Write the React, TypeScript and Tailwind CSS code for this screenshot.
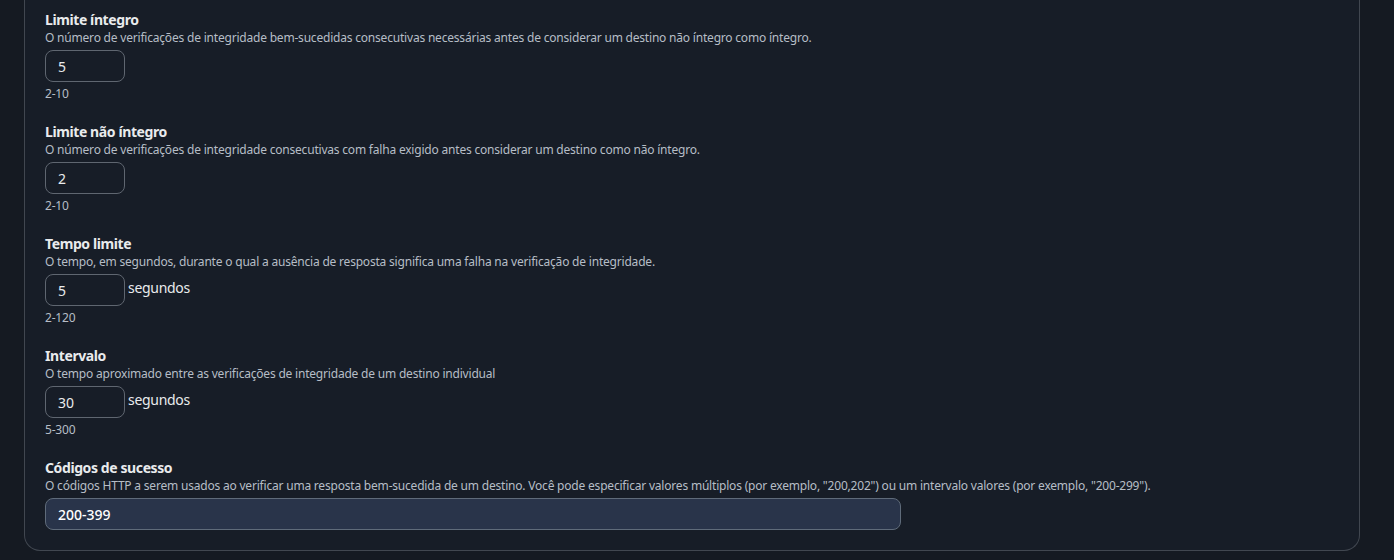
import React from 'react';

type Field = {
  label: string;
  description: string;
  value: string;
  hint?: string;
  unit?: string;
  wide?: boolean;
};

const FIELDS: Field[] = [
  {
    label: 'Limite íntegro',
    description:
      'O número de verificações de integridade bem-sucedidas consecutivas necessárias antes de considerar um destino não íntegro como íntegro.',
    value: '5',
    hint: '2-10',
  },
  {
    label: 'Limite não íntegro',
    description:
      'O número de verificações de integridade consecutivas com falha exigido antes considerar um destino como não íntegro.',
    value: '2',
    hint: '2-10',
  },
  {
    label: 'Tempo limite',
    description:
      'O tempo, em segundos, durante o qual a ausência de resposta significa uma falha na verificação de integridade.',
    value: '5',
    unit: 'segundos',
    hint: '2-120',
  },
  {
    label: 'Intervalo',
    description: 'O tempo aproximado entre as verificações de integridade de um destino individual',
    value: '30',
    unit: 'segundos',
    hint: '5-300',
  },
  {
    label: 'Códigos de sucesso',
    description:
      'O códigos HTTP a serem usados ao verificar uma resposta bem-sucedida de um destino. Você pode especificar valores múltiplos (por exemplo, "200,202") ou um intervalo valores (por exemplo, "200-299").',
    value: '200-399',
    wide: true,
  },
];

function FormField({ field }: { field: Field }) {
  return (
    <div className="flex flex-col">
      <label className="text-[14px] font-bold leading-[18px] tracking-[-0.4px] text-[#e9ebed]">
        {field.label}
      </label>
      <p className="mt-px text-[12px] leading-[16px] tracking-[-0.2px] text-[#b6bdc6]">{field.description}</p>
      <div className="mt-[4px] flex items-start gap-[3px]">
        {field.wide ? (
          <div className="flex h-[32px] w-[856px] items-center rounded-[8px] border border-[#5f6b7a] bg-[#29344a] px-[12px] text-[14px] font-medium text-white">
            {field.value}
          </div>
        ) : (
          <div className="flex h-[32px] w-[80px] items-center rounded-[8px] border border-[#5f6670] px-[12px] text-[14px] text-[#e9ebed]">
            {field.value}
          </div>
        )}
        {field.unit && (
          <span className="pt-[5px] text-[14px] leading-[18px] tracking-[-0.3px] text-[#e9ebed]">{field.unit}</span>
        )}
      </div>
      {field.hint && (
        <span className="mt-[4px] text-[12px] leading-[16px] tracking-[-0.2px] text-[#b6bdc6]">{field.hint}</span>
      )}
    </div>
  );
}

export default function App() {
  return (
    <div
      className="h-[560px] w-[1394px] overflow-hidden bg-[#151a22]"
      style={{ fontFamily: '"Noto Sans", "Open Sans", Arial, sans-serif' }}
    >
      <div className="-mt-[20px] ml-6 w-[1336px] rounded-b-[16px] border border-t-0 border-[#414750] bg-[#171d27] px-5 pb-[20px] pt-[31px]">
        <div className="flex flex-col gap-[21px]">
          {FIELDS.map((field) => (
            <FormField key={field.label} field={field} />
          ))}
        </div>
      </div>
    </div>
  );
}
